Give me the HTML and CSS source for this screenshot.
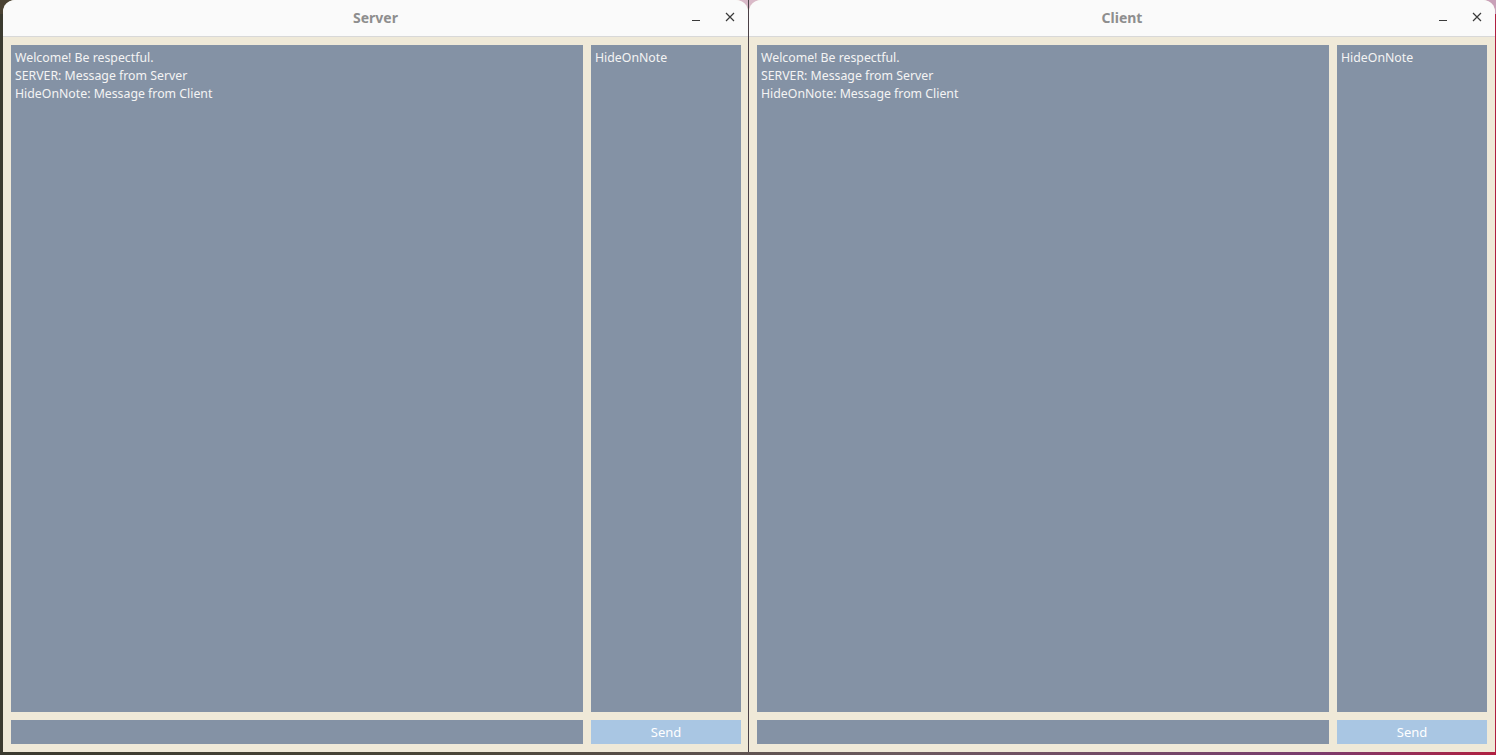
FILE: index.html
```html
<!DOCTYPE html>
<html>
<head>
<meta charset="utf-8">
<link rel="stylesheet" href="styles.css">
</head>
<body>
<div class="desktop">
  <div class="window win-left">
    <div class="titlebar">
      <span class="title">Server</span>
      <div class="controls">
        <span class="ctl min"><svg width="10" height="10" viewBox="0 0 10 10"><path d="M1 8.5h8" stroke="#3a3a3a" stroke-width="1.2"/></svg></span>
        <span class="ctl close"><svg width="10" height="10" viewBox="0 0 10 10"><path d="M1 1l8 8M9 1l-8 8" stroke="#3a3a3a" stroke-width="1.2"/></svg></span>
      </div>
    </div>
    <div class="content">
      <div class="chat">
        <div>Welcome! Be respectful.</div>
        <div>SERVER: Message from Server</div>
        <div>HideOnNote: Message from Client</div>
      </div>
      <div class="users"><div>HideOnNote</div></div>
      <div class="input"></div>
      <div class="send">Send</div>
    </div>
  </div>
  <div class="seam"></div>
  <div class="window win-right">
    <div class="titlebar">
      <span class="title">Client</span>
      <div class="controls">
        <span class="ctl min"><svg width="10" height="10" viewBox="0 0 10 10"><path d="M1 8.5h8" stroke="#3a3a3a" stroke-width="1.2"/></svg></span>
        <span class="ctl close"><svg width="10" height="10" viewBox="0 0 10 10"><path d="M1 1l8 8M9 1l-8 8" stroke="#3a3a3a" stroke-width="1.2"/></svg></span>
      </div>
    </div>
    <div class="content">
      <div class="chat">
        <div>Welcome! Be respectful.</div>
        <div>SERVER: Message from Server</div>
        <div>HideOnNote: Message from Client</div>
      </div>
      <div class="users"><div>HideOnNote</div></div>
      <div class="input"></div>
      <div class="send">Send</div>
    </div>
  </div>
</div>
</body>
</html>
```
FILE: styles.css
```css
html, body {
  margin: 0;
  padding: 0;
  width: 1496px;
  height: 755px;
  overflow: hidden;
}
body {
  background: linear-gradient(90deg, #3b3a2f 0%, #4a4638 30%, #6b5a5e 60%, #7a3c6e 88%, #b02040 100%);
  font-family: "Noto Sans", "DejaVu Sans", sans-serif;
}
.desktop {
  display: flex;
  padding-left: 3px;
  height: 752px;
  background:
    linear-gradient(#d9b9c8, #d9b9c8) 736px 0 / 26px 14px no-repeat,
    linear-gradient(#c8a0b8, #c8a0b8) 1482px 0 / 14px 14px no-repeat,
    linear-gradient(#4a4233, #4a4233) 0 0 / 14px 14px no-repeat;
}
.window {
  display: flex;
  flex-direction: column;
  background: #efe9d8;
  border-radius: 12px 12px 0 0;
  overflow: hidden;
  height: 752px;
}
.win-left { width: 745px; }
.win-right { width: 746px; }
.seam {
  width: 1px;
  background: #4a4046;
}
.titlebar {
  height: 36px;
  flex: none;
  background: #fafafa;
  border-bottom: 1px solid #d8d8d8;
  display: flex;
  align-items: center;
  justify-content: center;
  position: relative;
}
.title {
  font-size: 14px;
  font-weight: 700;
  color: #8e8e8e;
  margin-top: -1px;
}
.controls {
  position: absolute;
  right: 13px;
  top: 12px;
  display: flex;
  gap: 24px;
}
.ctl {
  width: 10px;
  height: 10px;
  display: block;
}
.ctl svg { display: block; }
.content {
  flex: 1;
  display: grid;
  grid-template-columns: 572px 150px;
  grid-template-rows: 667px 24px;
  gap: 8px;
  padding: 8px;
}
.chat, .users, .input {
  background: #8492a5;
  color: #f4f4f4;
  font-size: 12.3px;
  line-height: 18px;
  padding: 4px 4px;
  box-sizing: border-box;
}
.send {
  background: #a9c6e3;
  color: #ffffff;
  font-size: 13px;
  display: flex;
  align-items: center;
  justify-content: center;
}
```
